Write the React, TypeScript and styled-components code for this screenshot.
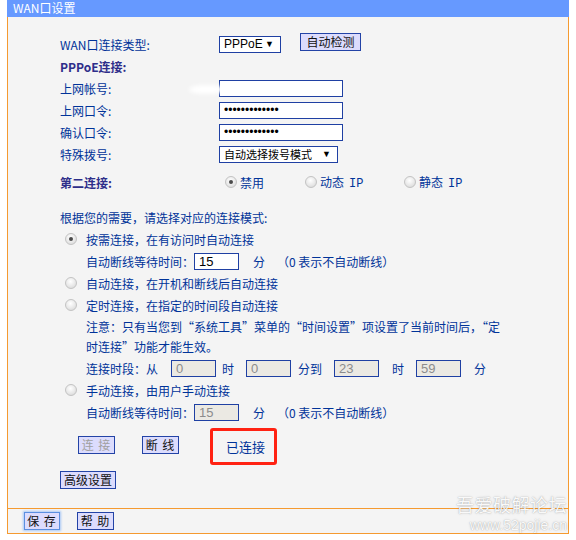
import styled, { createGlobalStyle, css } from 'styled-components';

const GlobalStyle = createGlobalStyle`
  html, body {
    margin: 0;
    padding: 0;
    background: #ffffff;
  }
`;

const cjk = `"Noto Sans CJK SC", "Liberation Sans", sans-serif`;
const blue = '#003399';
const orange = '#f59a30';

const Page = styled.div`
  position: relative;
  width: 562px;
  margin-left: 7px;
  font-family: ${cjk};
  font-size: 12px;
  color: ${blue};
`;

const Header = styled.div`
  height: 17px;
  background: #6699ff;
  color: #ffffff;
  padding-left: 6px;
  font-size: 12px;
  line-height: 15px;
`;

const Panel = styled.div`
  background: #f4f4f4;
  border-left: 1px solid ${orange};
  border-right: 1px solid ${orange};
  padding: 16px 0 19px 52px;
`;

const Row = styled.div<{ $indent?: number; $mt?: number; $h?: number }>`
  display: flex;
  align-items: center;
  height: ${({ $h }) => $h ?? 22}px;
  padding-left: ${({ $indent }) => $indent ?? 0}px;
  margin-top: ${({ $mt }) => $mt ?? 0}px;
  white-space: nowrap;
`;

const Label = styled.span<{ $w?: number }>`
  position: relative;
  flex: none;
  width: ${({ $w }) => $w ?? 159}px;
`;

const BoldLabel = styled(Label)`
  font-weight: bold;
  color: #2e2e8a;
`;

const Field = styled.div`
  position: relative;
  display: flex;
  align-items: center;
`;

const Smudge = styled.span`
  position: absolute;
  left: -30px;
  top: 5px;
  width: 36px;
  height: 9px;
  border-radius: 50%;
  background: #ffffff;
  filter: blur(2px);
`;

const TextInput = styled.input<{ $w: number; $ml?: number }>`
  box-sizing: border-box;
  width: ${({ $w }) => $w}px;
  height: 17px;
  margin: 0 0 0 ${({ $ml }) => $ml ?? 0}px;
  padding: 0 4px;
  border: 1px solid #1f40a3;
  border-radius: 0;
  background: #ffffff;
  color: #000000;
  font-family: "Liberation Sans", sans-serif;
  font-size: 13px;
  outline: none;
  &:disabled {
    background: #ebe9e3;
    color: #8c8c8c;
  }
  &[type='password'] {
    font-size: 12px;
    letter-spacing: 0;
  }
`;

const SelectBox = styled.div<{ $w: number; $cjk?: boolean }>`
  box-sizing: border-box;
  display: flex;
  align-items: center;
  justify-content: space-between;
  width: ${({ $w }) => $w}px;
  height: 17px;
  padding: 0 6px 0 4px;
  border: 1px solid #1f40a3;
  background: #ffffff;
  color: #000000;
  font-family: "Liberation Sans", ${cjk};
  font-size: ${({ $cjk }) => ($cjk ? 11 : 12)}px;
  .arrow {
    font-size: 9px;
  }
`;

const Button = styled.button<{
  $w: number;
  $ml?: number;
  $off?: boolean;
  $focus?: boolean;
  $spaced?: boolean;
}>`
  box-sizing: border-box;
  flex: none;
  width: ${({ $w }) => $w}px;
  height: 18px;
  margin: 0 0 0 ${({ $ml }) => $ml ?? 0}px;
  padding: 0;
  border: 1px solid #2343a6;
  border-radius: 0;
  background: #dcdcfd;
  color: ${({ $off }) => ($off ? '#a0a0a0' : '#111111')};
  font-family: ${cjk};
  font-size: 12px;
  line-height: 16px;
  white-space: pre;
  letter-spacing: ${({ $spaced }) => ($spaced ? '1px' : '0')};
  ${({ $focus }) =>
    $focus &&
    css`
      border-color: #5b8fe0;
      box-shadow: 0 0 2px 1px #a9c8f5;
    `}
`;

const RadioOption = styled.span<{ $w?: number; $gap?: number }>`
  display: inline-flex;
  align-items: center;
  gap: ${({ $gap }) => $gap ?? 3}px;
  width: ${({ $w }) => ($w ? `${$w}px` : 'auto')};
`;

const Radio = styled.span<{ $checked?: boolean }>`
  position: relative;
  flex: none;
  box-sizing: border-box;
  width: 12px;
  height: 12px;
  border-radius: 50%;
  border: 1px solid #c3c3c3;
  background: radial-gradient(circle at 45% 35%, #ffffff 0%, #e8e8e8 55%, #d2d2d2 100%);
  ${({ $checked }) =>
    $checked &&
    css`
      &::after {
        content: '';
        position: absolute;
        left: 3px;
        top: 3px;
        width: 4px;
        height: 4px;
        border-radius: 50%;
        background: #4a4a4a;
      }
    `}
`;

const Mono = styled.span`
  font-family: "Liberation Mono", monospace;
  font-size: 12px;
  margin-left: 5px;
`;

const Unit = styled.span<{ $ml: number }>`
  margin-left: ${({ $ml }) => $ml}px;
`;

const Note = styled.p`
  margin: 1px 0 0 26px;
  line-height: 20px;
  white-space: nowrap;
`;

const StatusBox = styled.div`
  box-sizing: border-box;
  display: flex;
  align-items: center;
  justify-content: center;
  width: 67px;
  height: 37px;
  margin-left: 31px;
  padding-left: 4px;
  border: 3px solid #ff2212;
  border-radius: 3px;
  font-size: 13px;
  color: ${blue};
`;

const Footer = styled.div`
  display: flex;
  align-items: center;
  gap: 17px;
  height: 24px;
  padding-left: 16px;
  background: #f4f4f4;
  border: 1px solid ${orange};
`;

const Watermark = styled.div`
  position: absolute;
  right: 2px;
  bottom: 0;
  display: flex;
  flex-direction: column;
  align-items: flex-end;
  color: rgba(255, 255, 255, 0.95);
  text-shadow: 0 0 1px rgba(0, 0, 0, 0.3), 0 0 3px rgba(0, 0, 0, 0.15);
  pointer-events: none;
  .cn {
    font-size: 18px;
    line-height: 26px;
    letter-spacing: 0.5px;
  }
  .url {
    font-family: "Liberation Sans", sans-serif;
    font-size: 14px;
    line-height: 17px;
  }
`;

const WaitRow = ({ disabled }: { disabled?: boolean }) => (
  <Row $indent={26}>
    <Label $w={108}>自动断线等待时间：</Label>
    <TextInput $w={45} defaultValue="15" disabled={disabled} />
    <Unit $ml={14}>分</Unit>
    <Unit $ml={12}>（0 表示不自动断线）</Unit>
  </Row>
);

export default function App() {
  return (
    <>
      <GlobalStyle />
      <Page>
        <Header>WAN口设置</Header>
        <Panel>
          <Row>
            <Label>WAN口连接类型:</Label>
            <SelectBox $w={62}>
              PPPoE <span className="arrow">▼</span>
            </SelectBox>
            <Button $w={61} $ml={19} style={{ marginTop: -4 }}>
              自动检测
            </Button>
          </Row>
          <Row>
            <BoldLabel>PPPoE连接:</BoldLabel>
          </Row>
          <Row>
            <Label>上网帐号:</Label>
            <Field>
              <Smudge />
              <TextInput $w={124} defaultValue="" />
            </Field>
          </Row>
          <Row>
            <Label>上网口令:</Label>
            <TextInput $w={124} type="password" defaultValue="aaaaaaaaaaaaa" />
          </Row>
          <Row>
            <Label>确认口令:</Label>
            <TextInput $w={124} type="password" defaultValue="aaaaaaaaaaaaa" />
          </Row>
          <Row>
            <Label>特殊拨号:</Label>
            <SelectBox $w={119} $cjk>
              自动选择拨号模式 <span className="arrow">▼</span>
            </SelectBox>
          </Row>
          <Row $mt={6}>
            <BoldLabel>第二连接:</BoldLabel>
            <Field style={{ marginLeft: 6 }}>
              <RadioOption $w={80}>
                <Radio $checked />
                <span>禁用</span>
              </RadioOption>
              <RadioOption $w={99}>
                <Radio />
                <span>
                  动态<Mono>IP</Mono>
                </span>
              </RadioOption>
              <RadioOption>
                <Radio />
                <span>
                  静态<Mono>IP</Mono>
                </span>
              </RadioOption>
            </Field>
          </Row>
          <Row $mt={13}>根据您的需要，请选择对应的连接模式:</Row>
          <Row $indent={5}>
            <RadioOption $gap={9}>
              <Radio $checked />
              按需连接，在有访问时自动连接
            </RadioOption>
          </Row>
          <WaitRow />
          <Row $indent={5}>
            <RadioOption $gap={9}>
              <Radio />
              自动连接，在开机和断线后自动连接
            </RadioOption>
          </Row>
          <Row $indent={5}>
            <RadioOption $gap={9}>
              <Radio />
              定时连接，在指定的时间段自动连接
            </RadioOption>
          </Row>
          <Note>
            注意：只有当您到“系统工具”菜单的“时间设置”项设置了当前时间后，“定
            <br />
            时连接”功能才能生效。
          </Note>
          <Row $indent={26}>
            <span>连接时段：从</span>
            <TextInput $w={45} $ml={13} defaultValue="0" disabled />
            <Unit $ml={6}>时</Unit>
            <TextInput $w={45} $ml={12} defaultValue="0" disabled />
            <Unit $ml={7}>分到</Unit>
            <TextInput $w={45} $ml={12} defaultValue="23" disabled />
            <Unit $ml={13}>时</Unit>
            <TextInput $w={45} $ml={12} defaultValue="59" disabled />
            <Unit $ml={13}>分</Unit>
          </Row>
          <Row $indent={5}>
            <RadioOption $gap={9}>
              <Radio />
              手动连接，由用户手动连接
            </RadioOption>
          </Row>
          <WaitRow disabled />
          <Row $indent={18} $mt={5} $h={37}>
            <Button $w={37} $off $spaced style={{ marginTop: -4 }}>
              {'连 接'}
            </Button>
            <Button $w={37} $ml={27} $spaced style={{ marginTop: -4 }}>
              {'断 线'}
            </Button>
            <StatusBox>已连接</StatusBox>
          </Row>
          <Row $indent={-5} $mt={6} $h={18}>
            <Button $w={56}>高级设置</Button>
          </Row>
        </Panel>
        <Footer>
          <Button $w={36} $focus $spaced>
            {'保 存'}
          </Button>
          <Button $w={37} $spaced>
            {'帮 助'}
          </Button>
        </Footer>
        <Watermark>
          <span className="cn">吾爱破解论坛</span>
          <span className="url">www.52pojie.cn</span>
        </Watermark>
      </Page>
    </>
  );
}
